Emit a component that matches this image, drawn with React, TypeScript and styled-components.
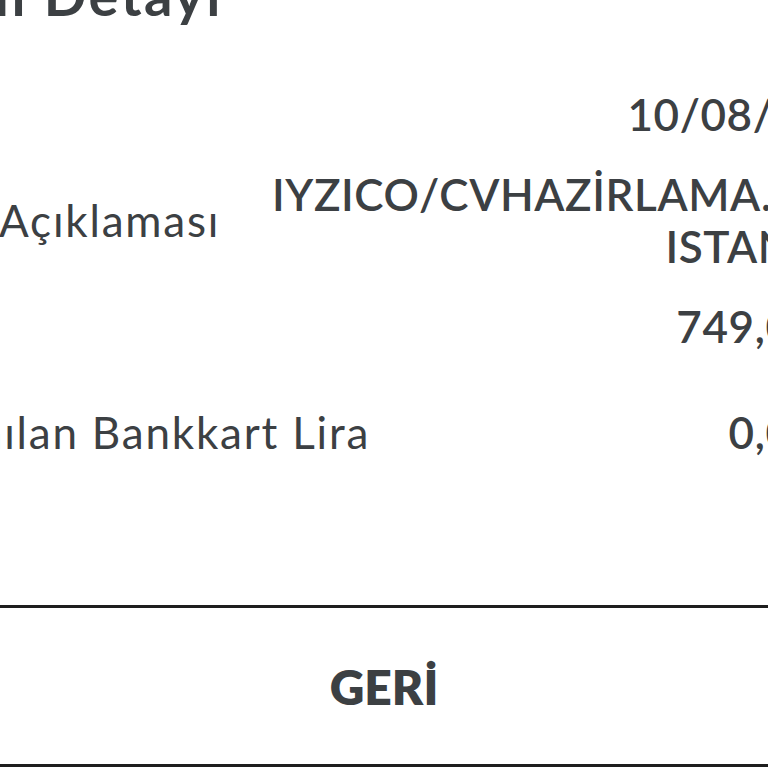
import React from "react";
import styled, { createGlobalStyle } from "styled-components";

const Global = createGlobalStyle`
  html, body { margin: 0; padding: 0; background: #ffffff; }
  body { width: 768px; height: 768px; overflow: hidden; font-family: Lato, "Noto Sans", sans-serif; }
  #root { width: 768px; height: 768px; overflow: hidden; }
`;

const Screen = styled.div`
  width: 768px;
  height: 768px;
  overflow: hidden;
  background: #ffffff;
  color: #3c4043;
  display: flex;
  flex-direction: column;
`;

const Content = styled.div`
  margin-left: -122px;
  width: 1000px;
  display: flex;
  flex-direction: column;
`;

const Title = styled.h1`
  margin: -33px 0 0 6px;
  font-size: 56px;
  line-height: 56px;
  font-weight: 700;
  letter-spacing: 2.5px;
  color: #3c4043;
  white-space: nowrap;
`;

const Rows = styled.div`
  margin-top: 38px;
  display: flex;
  flex-direction: column;
`;

const Row = styled.div`
  min-height: 106px;
  display: flex;
  align-items: center;
  justify-content: space-between;
  gap: 40px;
`;

const Label = styled.span`
  font-size: 44px;
  line-height: 52px;
  font-weight: 400;
  letter-spacing: 1.8px;
  white-space: nowrap;
`;

const Value = styled.span`
  font-size: 44px;
  line-height: 52px;
  font-weight: 600;
  letter-spacing: 0.6px;
  text-align: right;
  white-space: nowrap;
`;

const Footer = styled.div`
  margin-top: 120px;
  width: 768px;
`;

const BackButton = styled.button`
  width: 768px;
  height: 162px;
  margin: 0;
  padding: 0;
  background: #ffffff;
  border: none;
  border-top: 3px solid #1e1e1e;
  border-bottom: 3px solid #1e1e1e;
  font-family: Lato, "Noto Sans", sans-serif;
  font-size: 48px;
  font-weight: 800;
  color: #3c4043;
  display: flex;
  align-items: center;
  justify-content: center;
`;

const rows: { label: string; value: string[] }[] = [
  { label: "", value: ["10/08/2023"] },
  { label: "İşlem Açıklaması", value: ["IYZICO/CVHAZİRLAMA.COM", "ISTANBUL"] },
  { label: "", value: ["749,00 TL"] },
  { label: "Kazanılan Bankkart Lira", value: ["0,00 TL"] },
];

export default function App() {
  return (
    <>
      <Global />
      <Screen>
        <Content>
          <Title>İşlem Detayı</Title>
          <Rows>
            {rows.map((r, idx) => (
              <Row key={idx}>
                <Label>{r.label}</Label>
                <Value>
                  {r.value.map((v, i) => (
                    <React.Fragment key={v}>
                      {i > 0 && <br />}
                      {v}
                    </React.Fragment>
                  ))}
                </Value>
              </Row>
            ))}
          </Rows>
        </Content>
        <Footer>
          <BackButton>GERİ</BackButton>
        </Footer>
      </Screen>
    </>
  );
}
